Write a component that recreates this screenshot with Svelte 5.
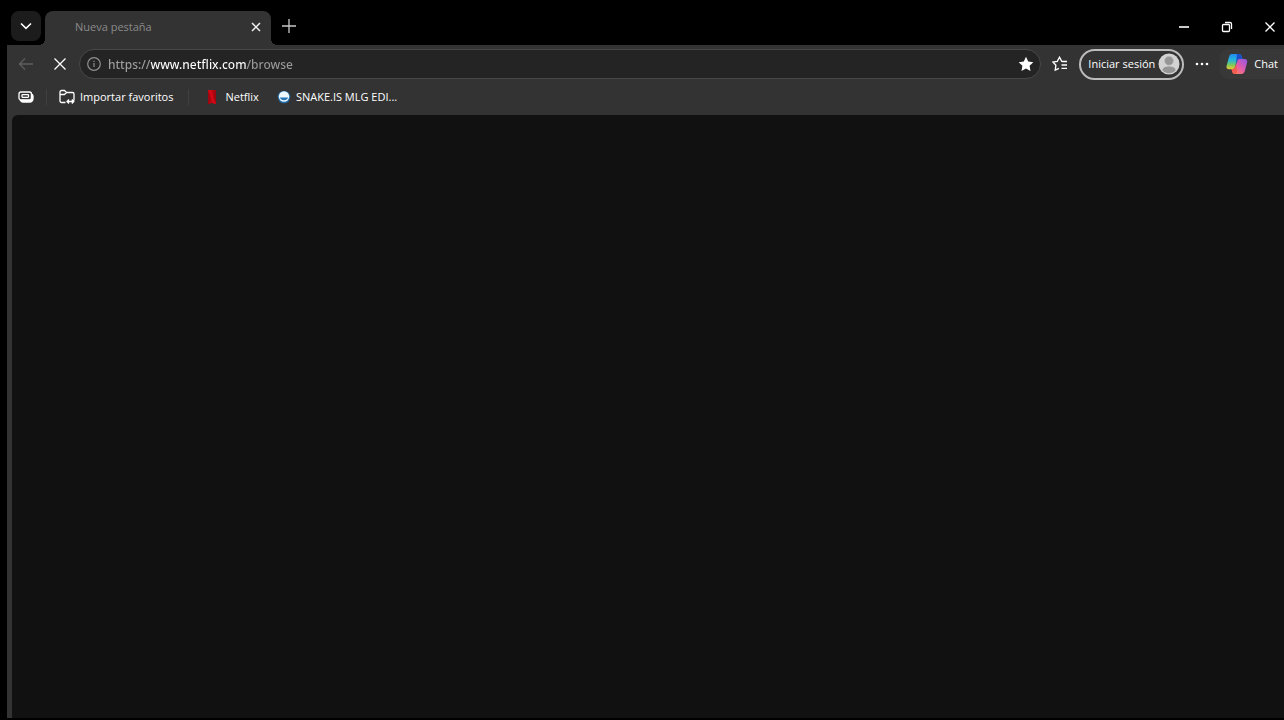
<script>
  let address = $state('https://www.netflix.com/browse');
</script>

<div class="browser">
  <header class="tabstrip">
    <button class="tab-actions" aria-label="Acciones de pestañas">
      <svg width="12" height="8" viewBox="0 0 12 8"><path d="M1 1.500 6 6.300l5-4.800" /></svg>
    </button>
    <div class="tab">
      <span>Nueva pestaña</span>
      <button class="close-tab" aria-label="Cerrar pestaña">
        <svg width="10" height="10" viewBox="0 0 10 10"><path d="m1 1 8 8M9 1 1 9" /></svg>
      </button>
    </div>
    <button class="new-tab" aria-label="Nueva pestaña">
      <svg width="14" height="14" viewBox="0 0 14 14"><path d="M7 0v14M0 7h14" /></svg>
    </button>
    <div class="window-controls">
      <button aria-label="Minimizar"><svg width="12" height="12" viewBox="0 0 12 12"><path d="M1 6h10" stroke-width="1.6" /></svg></button>
      <button aria-label="Restaurar">
        <svg width="12" height="12" viewBox="0 0 12 12"><rect x="1.5" y="3.5" width="7" height="7" rx="1" /><path d="M4 1.500h5a1.500 1.500 0 0 1 1.500 1.500v5" /></svg>
      </button>
      <button aria-label="Cerrar"><svg width="12" height="12" viewBox="0 0 12 12"><path d="m1.500 1.500 9 9M10.500 1.500l-9 9" /></svg></button>
    </div>
  </header>

  <div class="frame">
    <nav class="toolbar">
      <button class="nav dim" aria-label="Atrás">
        <svg width="16" height="14" viewBox="0 0 16 14"><path d="M15 7H1.500M7 1.500 1.500 7 7 12.500" /></svg>
      </button>
      <button class="nav" aria-label="Detener">
        <svg width="14" height="14" viewBox="0 0 14 14"><path d="m1.500 1.500 11 11M12.500 1.500l-11 11" /></svg>
      </button>
      <div class="address">
        <button class="info" aria-label="Información del sitio">
          <svg width="14" height="14" viewBox="0 0 14 14"><circle cx="7" cy="7" r="6.300" /><path d="M7 6v4M7 3.700v1.300" /></svg>
        </button>
        <input type="text" aria-label="Dirección" bind:value={address} />
        <button class="favorite" aria-label="Editar favorito">
          <svg width="16" height="16" viewBox="0 0 16 16"><path d="m8 .8 2.200 4.700 5.100.7-3.700 3.600.9 5.200L8 12.500 3.500 15l.9-5.200L.7 6.200l5.100-.7z" /></svg>
        </button>
      </div>
      <button class="collection" aria-label="Favoritos">
        <svg width="16" height="16" viewBox="0 0 16 16"><path d="M10.500 5.500 9.800 5.400 7.500 1.200 5.300 5.300.9 6l3 3.200-.7 4.900 3.700-1.700M10.500 5.500H15M9.500 9H15M9.500 12.300H15" /></svg>
      </button>
      <button class="profile">
        Iniciar sesión
        <svg width="22" height="22" viewBox="0 0 22 22"><circle cx="11" cy="11" r="10.500" fill="#d2d2d2" /><path d="M4.500 17.500c0-3 2.500-4 6.500-4s6.500 1 6.500 4c-3.500 3.700-9.500 3.700-13 0Z" fill="#969696" /><circle cx="11" cy="7.800" r="4.500" fill="#969696" stroke="#c2c2c2" stroke-width=".6" /></svg>
      </button>
      <button class="more" aria-label="Configuración y más">
        <svg width="14" height="4" viewBox="0 0 14 4"><circle cx="2" cy="2" r="1.300" /><circle cx="7" cy="2" r="1.300" /><circle cx="12" cy="2" r="1.300" /></svg>
      </button>
      <button class="chat">
        <svg width="22" height="20" viewBox="0 0 22 20">
          <defs>
            <linearGradient id="cool" x1="0" y1="0" x2="0" y2="1"><stop stop-color="#208bf2" /><stop offset=".4" stop-color="#28b7db" /><stop offset=".7" stop-color="#78c860" /><stop offset="1" stop-color="#f0c72d" /></linearGradient>
            <linearGradient id="warm" x1="1" y1="0" x2="0" y2="1"><stop stop-color="#8e58e8" /><stop offset=".5" stop-color="#e45baa" /><stop offset="1" stop-color="#ff913f" /></linearGradient>
          </defs>
          <path d="M6 0h7c1.700 0 2.200 1 2.700 2.500L16.500 5h-3c-1.500 0-2 .7-2.500 2.300L9 13c-.5 1.600-1.500 2.300-3 2.300H3c-2 0-3-1.300-2.400-3.500L3 3C3.500 1 4.300 0 6 0Z" fill="url(#cool)" />
          <path d="M13 5h5.700c2 0 3 1.300 2.400 3.500L19 16.500c-.6 2.200-1.600 3.500-3.500 3.500H9c-1.700 0-2.400-1-2.800-2.500L5.500 15H7c1.200 0 1.900-.8 2.300-2l2-5.900c.4-1.300.7-2.100 1.700-2.100Z" fill="url(#warm)" />
          <path d="M11 0h2c1.700 0 2.200 1 2.700 2.500L16.500 5H13c-1 0-1.500.8-1.900 2L9.700 11Z" fill="#1b50c9" />
          <path d="M5.500 15H7c1.200 0 1.900-.8 2.300-2l1-3 .7 7.500c.1 1.500-.7 2.500-2 2.500-1.700 0-2.400-1-2.800-2.500Z" fill="#f35a51" />
        </svg>
        Chat
      </button>
    </nav>

    <nav class="bookmarks" aria-label="Barra de favoritos">
      <button class="workspace" aria-label="Áreas de trabajo">
        <svg width="16" height="12" viewBox="0 0 16 12"><path fill="currentColor" d="M13.500 3c1 .3 1.500 1 1.500 2v2.500C15 9.800 13.500 11 11.500 11H5c-1.200 0-2-.5-2.500-1.500h9a2 2 0 0 0 2-2Z" /><path d="M3 1h8.500a2 2 0 0 1 2 2v4a2 2 0 0 1-2 2H3a2 2 0 0 1-2-2V3a2 2 0 0 1 2-2Z" /><rect x="4" y="3.700" width="6.500" height="2.600" rx=".5" /></svg>
      </button>
      <i></i>
      <button class="import">
        <svg width="16" height="16" viewBox="0 0 16 16"><path d="M6.500 13.500h-4a1.500 1.500 0 0 1-1.500-1.500V3a1.500 1.500 0 0 1 1.500-1.500h3L7.500 3.500h6A1.500 1.500 0 0 1 15 5v6.500M1 5.500h4.500l2-2M8 12.500h6.500M10 10.500l-2 2 2 2M12.800 10.500l2 2-2 2" /></svg>
        Importar favoritos
      </button>
      <i></i>
      <a class="netflix" href="https://www.netflix.com/browse">
        <svg width="10" height="16" viewBox="0 0 10 16"><path d="M1 1h8v14l-4-1-4 1Z" fill="#c00814" /><path d="M1 1h2.500v13.500L1 15ZM6.500 1H9v14l-2.500-.5Z" fill="#a00610" /><path d="M1 1h2.500L9 15l-2.500-.5Z" fill="#d50914" /></svg>
        Netflix
      </a>
      <a class="snake" href="#snake">
        <svg width="14" height="14" viewBox="0 0 14 14"><circle cx="7" cy="7" r="6.300" fill="#216ca9" /><circle cx="7" cy="6.500" r="5.200" fill="#eef7ff" /><path d="M3 7.500h8c-.5 3.500-7.500 3.500-8 0Z" fill="#2475b7" /></svg>
        SNAKE.IS MLG EDI...
      </a>
    </nav>
    <main></main>
  </div>
</div>

<style>
  :global(body) { margin: 0; background: #000; }
  .browser {
    min-height: 100vh;
    box-sizing: border-box;
    padding: 0 0 2px 7px;
    display: flex;
    flex-direction: column;
    overflow: hidden;
    background: #000;
    color: #fff;
    font: 500 11px/16px "Open Sans", "Noto Sans", sans-serif;
  }
  button, input { font: inherit; color: inherit; border: 0; background: none; padding: 0; margin: 0; }
  button, a { display: flex; align-items: center; justify-content: center; flex: none; white-space: nowrap; }
  a { color: inherit; text-decoration: none; }
  svg { display: block; flex: none; fill: none; stroke: currentColor; stroke-width: 1.3; }
  .chat svg, .profile svg, .netflix svg, .snake svg { stroke: none; }

  .tabstrip { display: flex; align-items: flex-end; height: 45px; }
  .tab-actions { width: 30px; height: 30px; margin: 0 4px 4px; border-radius: 8px; background: #1c1c1c; }
  .tab-actions svg { stroke-width: 1.6; }
  .tab {
    position: relative;
    display: flex;
    align-items: center;
    justify-content: space-between;
    width: 226px;
    height: 34px;
    box-sizing: border-box;
    padding: 0 5px 2px 30px;
    border-radius: 8px 8px 0 0;
    background: #333;
    color: #8a8a8a;
  }
  .tab::before, .tab::after {
    content: "";
    position: absolute;
    bottom: 0;
    width: 6px;
    height: 6px;
  }
  .tab::before { right: 100%; background: radial-gradient(circle at 0 0, transparent 6px, #333 6px); }
  .tab::after { left: 100%; background: radial-gradient(circle at 100% 0, transparent 6px, #333 6px); }
  .close-tab { width: 20px; height: 20px; color: #f0f0f0; }
  .close-tab svg { stroke-width: 1.5; }
  .new-tab { width: 28px; height: 28px; margin: 0 0 5px 4px; color: #c8c8c8; }
  .window-controls { display: flex; margin-left: auto; height: 37px; }
  .window-controls button { width: 43px; }
  .window-controls button:last-child { width: 28px; margin-left: 8px; }

  .frame { flex: 1; display: flex; flex-direction: column; padding-left: 5px; background: #333; }
  .toolbar { display: flex; align-items: center; height: 38px; }
  .nav { width: 28px; height: 28px; margin-right: 6px; }
  .nav + .nav { margin-right: 5px; }
  .dim { color: #5f5f5f; }
  .address {
    display: flex;
    align-items: center;
    flex: 1;
    min-width: 0;
    height: 30px;
    box-sizing: border-box;
    border: 1px solid #484848;
    border-radius: 15px;
    background: #242424;
  }
  .info { width: 28px; height: 28px; color: #8f8f8f; }
  .info svg { stroke-width: 1.2; }
  input {
    flex: 1;
    min-width: 0;
    height: 28px;
    outline: 0;
    font-family: "Noto Sans", sans-serif;
    font-size: 12px;
    color: transparent;
    background: linear-gradient(90deg, #a0a0a0 42px, #fff 42px 138px, #999 138px);
    background-clip: text;
  }
  .favorite { width: 28px; height: 28px; }
  .favorite svg { fill: #fff; stroke: none; }
  .collection { width: 30px; height: 30px; margin: 0 4px; }
  .profile {
    height: 31px;
    gap: 3px;
    padding: 0 2px 0 7px;
    border: 2px solid #bcbcbc;
    border-radius: 16px;
    box-sizing: border-box;
  }
  .more { width: 28px; height: 28px; margin: 0 4px; }
  .more svg { fill: currentColor; stroke: none; }
  .chat { height: 30px; padding: 0 6px; gap: 6px; border-radius: 8px 0 0 8px; background: #383838; }

  .bookmarks { display: flex; align-items: center; height: 28px; padding-bottom: 4px; }
  .bookmarks i { width: 1px; height: 16px; background: #404040; }
  .workspace { width: 28px; height: 28px; margin-right: 6px; }
  .import { gap: 5px; margin: 0 15px 0 12px; }
  .netflix { gap: 8px; margin: 0 18px; }
  .snake { gap: 5px; }
  main { flex: 1; border-radius: 6px 0 0 0; background: #111; }
</style>
